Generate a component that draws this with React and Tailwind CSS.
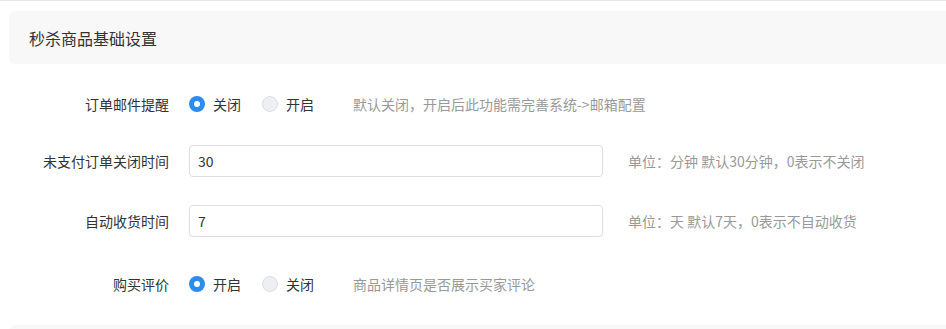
const font = { fontFamily: '"Noto Sans CJK SC", "Liberation Sans", sans-serif' };

const Radio = ({ checked, label }) => (
    <label className="flex items-center">
        {checked ? (
            <span className="w-4 h-4 rounded-full bg-[#2d8cf0] flex items-center justify-center">
                <span className="w-1.5 h-1.5 rounded-full bg-white"></span>
            </span>
        ) : (
            <span className="w-4 h-4 rounded-full bg-[#eeeff2] border border-[#dcdee2]"></span>
        )}
        <span className="ml-2 text-[14px] text-[#333]">{label}</span>
    </label>
);

const Row = ({ label, className, children }) => (
    <div className={`flex items-center h-8 ${className}`}>
        <div className="w-[169px] text-right text-[14px] text-[#333]">{label}</div>
        <div className="ml-5 flex items-center">{children}</div>
    </div>
);

const Hint = ({ className, children }) => (
    <span className={`text-[14px] text-[#999] ${className}`}>{children}</span>
);

export default function App() {
    return (
        <div className="w-[946px] h-[329px] bg-white border-t border-[#e8e8e8] overflow-hidden" style={font}>
            <div className="ml-[9px] mt-[10px] h-[53px] bg-[#f8f8f8] rounded-l-md flex items-center pl-5">
                <h2 className="text-[16px] text-[#333] leading-none">秒杀商品基础设置</h2>
            </div>

            <Row label="订单邮件提醒" className="mt-6">
                <Radio checked label="关闭" />
                <div className="ml-[21px]"><Radio label="开启" /></div>
                <Hint className="ml-[39px]">默认关闭，开启后此功能需完善系统-&gt;邮箱配置</Hint>
            </Row>

            <Row label="未支付订单关闭时间" className="mt-[25px]">
                <input
                    type="text"
                    defaultValue="30"
                    className="w-[414px] h-8 px-2 border border-[#dcdee2] rounded text-[14px] text-[#333] outline-none bg-white"
                />
                <Hint className="ml-[25px]">单位：分钟 默认30分钟，0表示不关闭</Hint>
            </Row>

            <Row label="自动收货时间" className="mt-[28px]">
                <input
                    type="text"
                    defaultValue="7"
                    className="w-[414px] h-8 px-2 border border-[#dcdee2] rounded text-[14px] text-[#333] outline-none bg-white"
                />
                <Hint className="ml-[25px]">单位：天 默认7天，0表示不自动收货</Hint>
            </Row>

            <Row label="购买评价" className="mt-[31px]">
                <Radio checked label="开启" />
                <div className="ml-[21px]"><Radio label="关闭" /></div>
                <Hint className="ml-[39px]">商品详情页是否展示买家评论</Hint>
            </Row>

            <div className="ml-[9px] mt-[25px] h-10 bg-[#f8f8f8] rounded-l-md"></div>
        </div>
    );
}
